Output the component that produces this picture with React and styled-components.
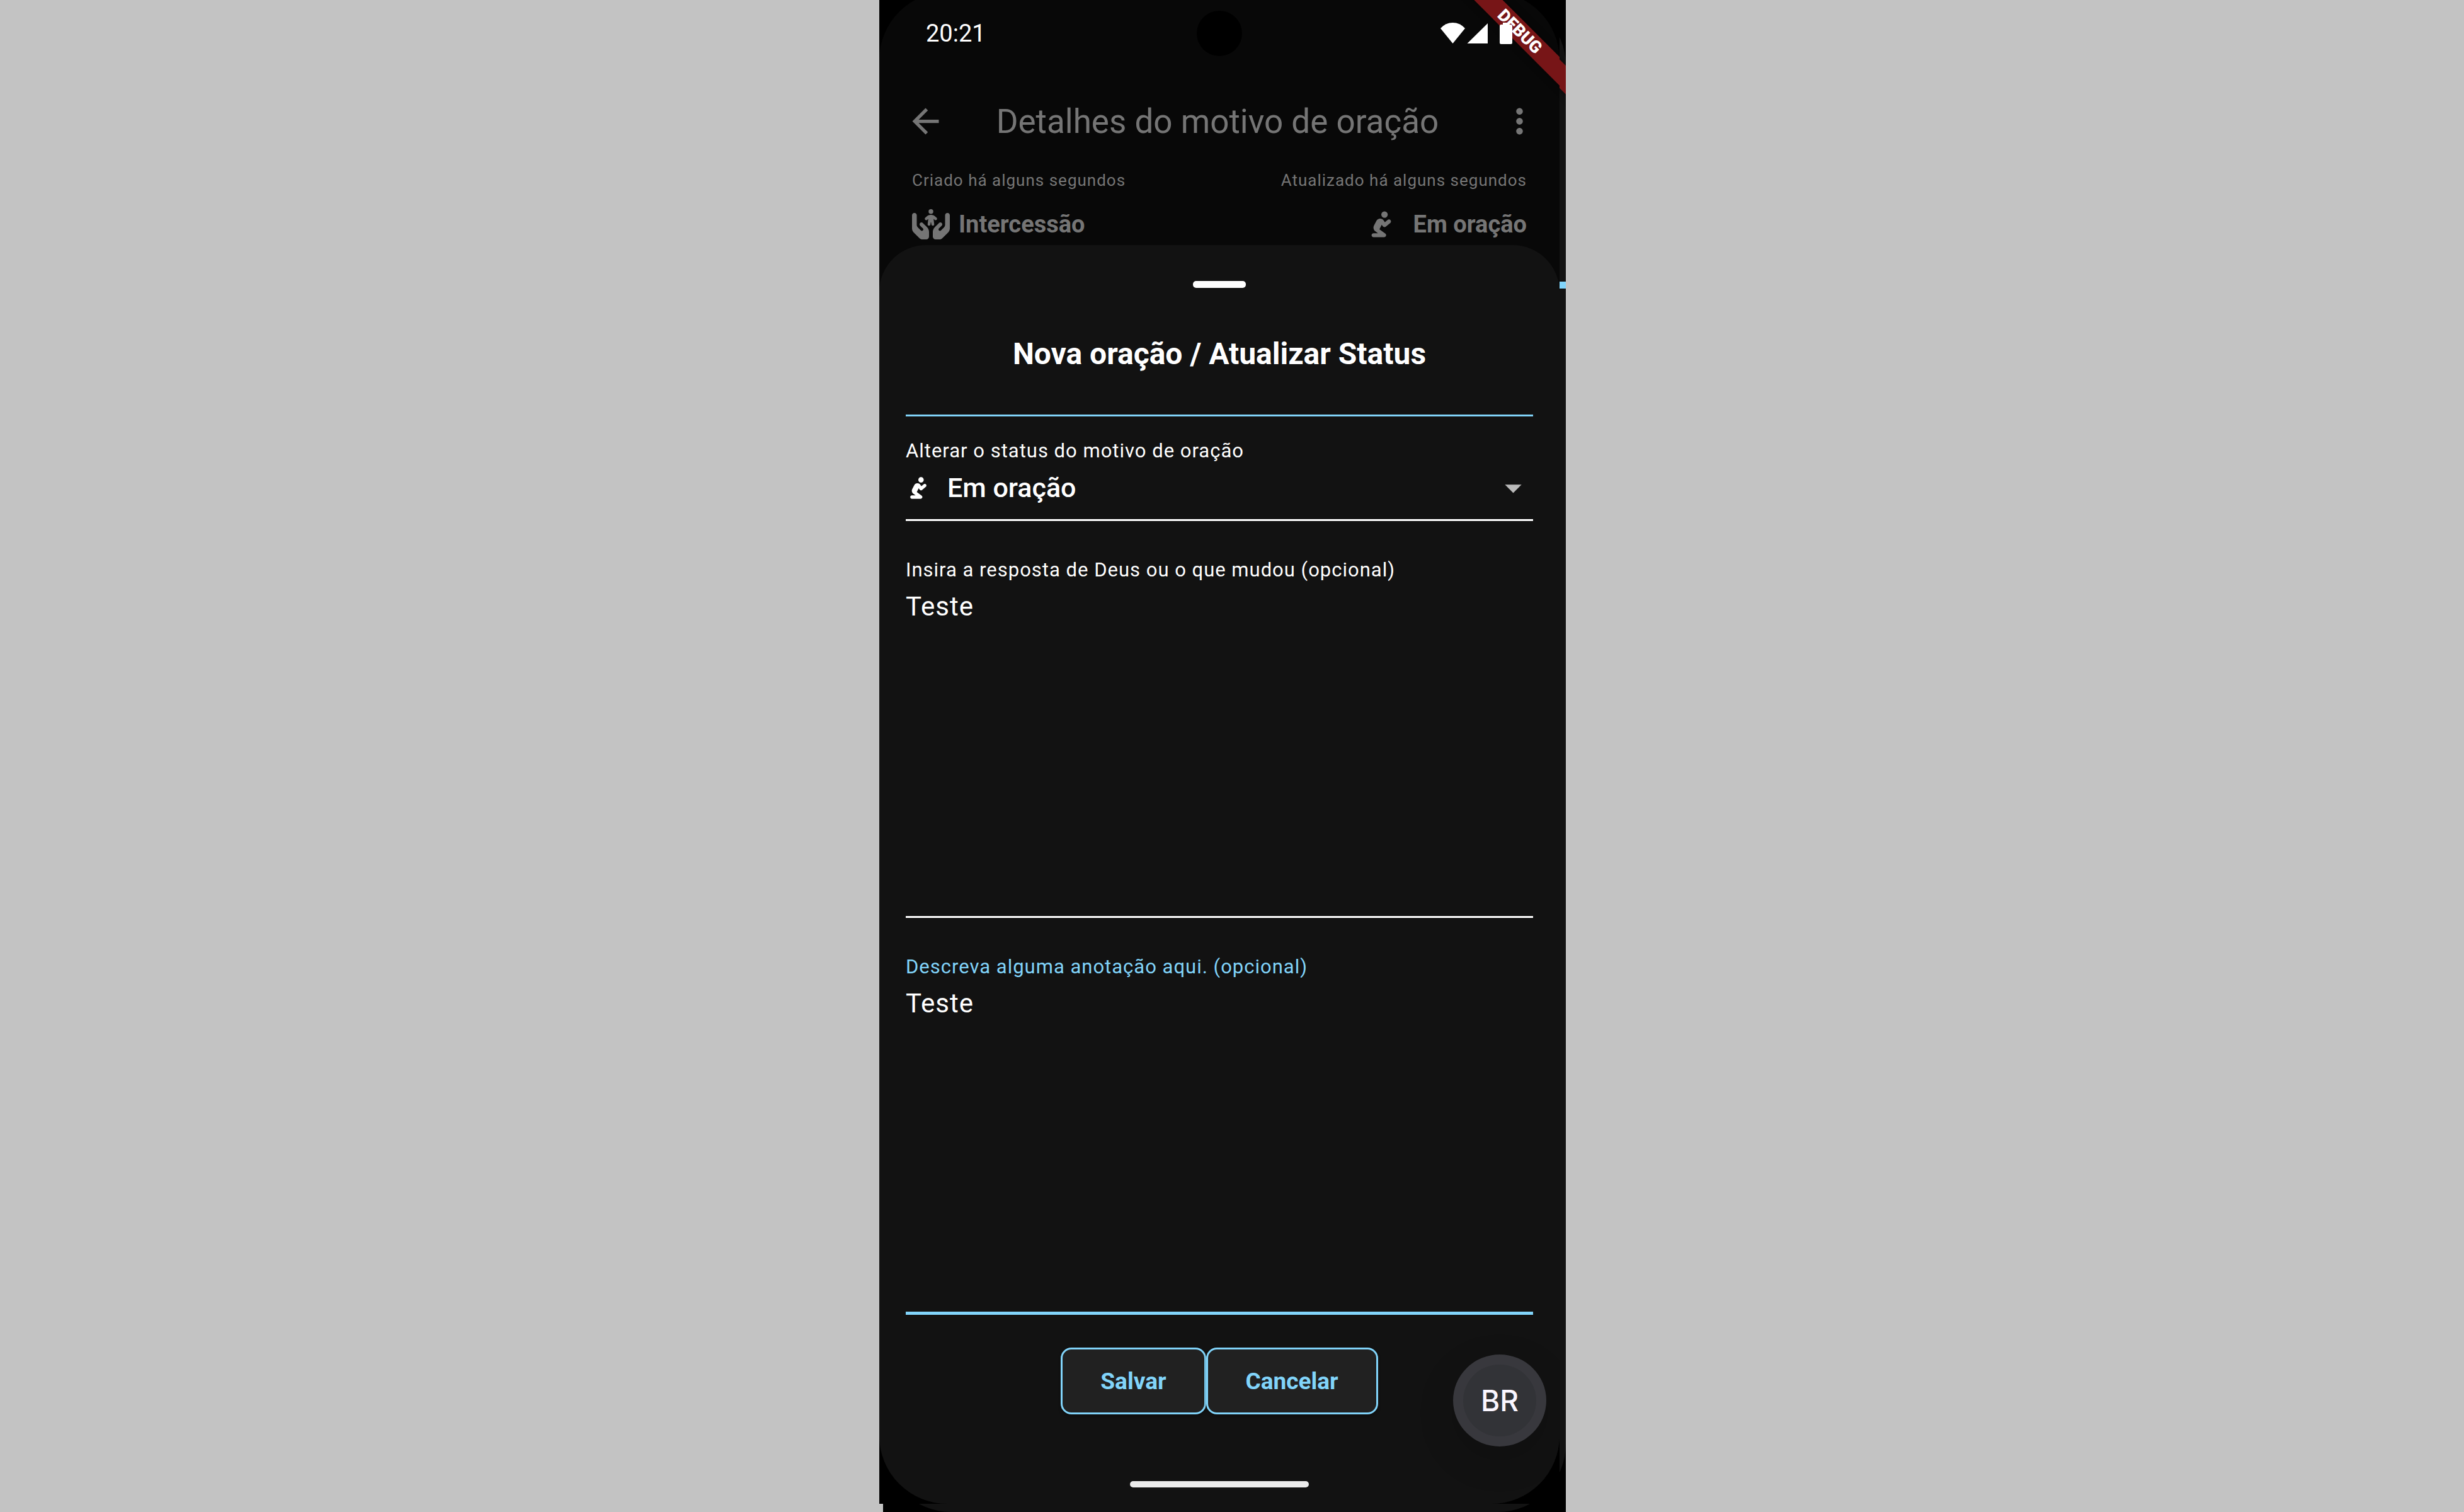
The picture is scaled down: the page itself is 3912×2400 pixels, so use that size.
import React, { useState } from "react";
import styled, { createGlobalStyle, css } from "styled-components";
import { FaHandsHoldingChild, FaPersonPraying } from "react-icons/fa6";
import { MdArrowBack, MdArrowDropDown, MdMoreVert } from "react-icons/md";

const color = {
  stage: "#c3c3c3",
  bezel: "#000000",
  dimmed: "#080808",
  sheet: "#121212",
  muted: "#757575",
  text: "#ffffff",
  accent: "#81d4fa",
  button: "#212121",
};

const GlobalStyle = createGlobalStyle`
  *, *::before, *::after { box-sizing: border-box; }
  body { margin: 0; background: ${color.stage}; }
  button, select, textarea { font: inherit; color: inherit; margin: 0; }
`;

const Stage = styled.div`
  display: flex;
  justify-content: center;
  min-height: 100vh;
  padding-right: 30px;
  font-family: Roboto, "Liberation Sans", sans-serif;
  color: ${color.text};
`;

const Device = styled.div`
  display: grid;
  width: 1090px;
  max-width: 100%;
  overflow: hidden;
`;

const layer = css`
  grid-area: 1 / 1;
  display: flex;
  flex-direction: column;
  background: ${color.bezel};
  overflow: hidden;
  position: relative;
  isolation: isolate;
`;

const BackLayer = styled.div`
  ${layer}
  margin-left: 6px;
`;

const BackScreen = styled.div`
  flex: 1;
  margin-top: -4px;
  border-radius: 108px;
  background: ${color.sheet};
`;

const BackHandle = styled.div`
  position: absolute;
  top: 447px;
  right: 0;
  width: 74px;
  height: 11px;
  background: ${color.accent};
`;

const FrontLayer = styled.div`
  ${layer}
  margin: 0 10px 13px 0;
`;

const Screen = styled.div`
  flex: 1;
  display: flex;
  flex-direction: column;
  margin-top: -13px;
  padding-top: 13px;
  border-radius: 108px;
  background: ${color.dimmed};
  overflow: hidden;
`;

const StatusBar = styled.header`
  display: grid;
  grid-template-columns: 1fr auto 1fr;
  align-items: center;
  height: 106px;
  padding: 0 74px;
  font-size: 38px;
`;

const Camera = styled.div`
  width: 72px;
  height: 72px;
  border-radius: 50%;
  background: ${color.bezel};
`;

const StatusIcons = styled.div`
  justify-self: end;
  position: relative;
  z-index: 2;
  svg { display: block; }
`;

const Ribbon = styled.div`
  position: absolute;
  z-index: 1;
  top: ${(p) => p.$top}px;
  right: -137px;
  width: 400px;
  height: 32px;
  background: #771517;
  box-shadow: 0 0 12px rgba(0, 0, 0, 0.5);
  font-size: 27px;
  font-weight: 900;
  line-height: 32px;
  text-align: center;
  transform: rotate(45deg);
`;

const AppBar = styled.nav`
  display: flex;
  align-items: center;
  height: 147px;
  margin: 13px 0 4px;
  padding: 0 32px 0 42px;
  color: ${color.muted};
`;

const IconButton = styled.button`
  display: flex;
  padding: 0;
  border: 0;
  background: none;
  font-size: 63px;
`;

const PageTitle = styled.h1`
  flex: 1;
  margin: 0;
  padding-right: 16px;
  font-size: 53px;
  font-weight: 400;
  line-height: 64px;
  text-align: center;
`;

const Meta = styled.div`
  display: flex;
  justify-content: space-between;
  padding: 0 52px;
  color: ${color.muted};
`;

const MetaDate = styled.p`
  margin: 0;
  font-size: 26px;
  line-height: 32px;
  letter-spacing: 1px;
`;

const MetaTag = styled.p`
  display: flex;
  align-items: center;
  gap: ${(p) => p.$gap}px;
  margin: 0;
  padding: 30px 0 9px;
  font-size: 38px;
  font-weight: 700;
  line-height: 48px;
  svg {
    flex: none;
    width: ${(p) => p.$icon}px;
    height: 48px;
  }
`;

const Sheet = styled.section`
  flex: 1;
  display: flex;
  flex-direction: column;
  padding: 57px 42px 0;
  border-radius: 74px 74px 0 0;
  background: ${color.sheet};
`;

const Handle = styled.div`
  align-self: center;
  width: ${(p) => p.$width}px;
  height: ${(p) => p.$height}px;
  border-radius: 5px;
  background: ${(p) => p.$tone};
`;

const SheetTitle = styled.h2`
  margin: 0;
  padding: 75px 0 66px;
  border-bottom: 3px solid ${color.accent};
  font-size: 48px;
  font-weight: 700;
  line-height: 60px;
  text-align: center;
`;

const Form = styled.form`
  display: flex;
  flex-direction: column;
`;

const Field = styled.div`
  display: flex;
  flex-direction: column;
  min-height: ${(p) => (p.$tall ? 630 : 166)}px;
  padding-top: ${(p) => (p.$tall ? 59 : 36)}px;
  border-bottom: ${(p) => (p.$active ? `5px solid ${color.accent}` : `3px solid ${color.text}`)};
`;

const Label = styled.label`
  font-size: 31px;
  line-height: 38px;
  letter-spacing: 1px;
  color: ${(p) => (p.$active ? color.accent : color.text)};
`;

const SelectRow = styled.div`
  flex: 1;
  display: flex;
  align-items: center;
  padding-bottom: 11px;
`;

const SelectIcon = styled.span`
  display: flex;
  width: 66px;
  padding-left: 5px;
  svg { width: 30px; height: 39px; }
`;

const Select = styled.select`
  flex: 1;
  padding: 0;
  border: 0;
  outline: 0;
  appearance: none;
  background: none;
  font-size: 43px;
  font-weight: 500;
  line-height: 50px;
`;

const SelectArrow = styled(MdArrowDropDown)`
  width: 63px;
  height: 63px;
  color: #bababa;
`;

const TextArea = styled.textarea`
  flex: 1;
  padding: 14px 0 0;
  border: 0;
  outline: 0;
  resize: none;
  background: none;
  font-size: 42px;
  line-height: 50px;
  letter-spacing: 1px;
`;

const Actions = styled.div`
  display: flex;
  justify-content: center;
  padding: 52px 0 106px;
`;

const ActionButton = styled.button`
  height: 106px;
  padding: 0 60px;
  border: 3px solid ${color.accent};
  border-radius: 17px;
  background: ${color.button};
  box-shadow: 0 3px 5px rgba(0, 0, 0, 0.3);
  color: ${color.accent};
  font-size: 37px;
  font-weight: 700;
`;

const Bubble = styled.button`
  position: absolute;
  right: 21px;
  bottom: 91px;
  width: 148px;
  height: 146px;
  padding: 0;
  border: 16px solid #38383d;
  border-radius: 50%;
  background: #323337;
  box-shadow: 0 20px 60px rgba(0, 0, 0, 0.15);
  color: #faf6ff;
  font-family: Inter, Roboto, sans-serif;
  font-size: 46px;
  font-weight: 500;
`;

function SignalIcons() {
  return (
    <svg width="115" height="36" viewBox="0 0 115 36" fill="#fff" aria-hidden="true">
      <path d="M0 10Q8 1 19.500 1T39 10L19.500 34Z" />
      <path d="M75 2V34H42.500Z" />
      <path d="M99 1h10v3h3a2 2 0 0 1 2 2v27a2 2 0 0 1-2 2H96a2 2 0 0 1-2-2V6a2 2 0 0 1 2-2h3Z" />
    </svg>
  );
}

export default function App() {
  const [answer, setAnswer] = useState("Teste");
  const [note, setNote] = useState("Teste");

  return (
    <Stage>
      <GlobalStyle />
      <Device>
        <BackLayer aria-hidden="true">
          <BackScreen />
          <Ribbon $top={48} />
          <BackHandle />
        </BackLayer>
        <FrontLayer>
          <Screen>
            <StatusBar>
              <time>20:21</time>
              <Camera />
              <StatusIcons>
                <SignalIcons />
              </StatusIcons>
            </StatusBar>
            <AppBar>
              <IconButton type="button" aria-label="Voltar">
                <MdArrowBack />
              </IconButton>
              <PageTitle>Detalhes do motivo de oração</PageTitle>
              <IconButton type="button" aria-label="Mais opções">
                <MdMoreVert />
              </IconButton>
            </AppBar>
            <Meta>
              <MetaDate>Criado há alguns segundos</MetaDate>
              <MetaDate>Atualizado há alguns segundos</MetaDate>
            </Meta>
            <Meta>
              <MetaTag $icon={60} $gap={14}>
                <FaHandsHoldingChild />
                Intercessão
              </MetaTag>
              <MetaTag $icon={36} $gap={33}>
                <FaPersonPraying />
                Em oração
              </MetaTag>
            </Meta>
            <Sheet>
              <Handle $width={84} $height={11} $tone={color.text} />
              <SheetTitle>Nova oração / Atualizar Status</SheetTitle>
              <Form onSubmit={(e) => e.preventDefault()}>
                <Field>
                  <Label htmlFor="status">Alterar o status do motivo de oração</Label>
                  <SelectRow>
                    <SelectIcon>
                      <FaPersonPraying />
                    </SelectIcon>
                    <Select id="status" defaultValue="praying">
                      <option value="praying">Em oração</option>
                    </Select>
                    <SelectArrow />
                  </SelectRow>
                </Field>
                <Field $tall>
                  <Label htmlFor="answer">Insira a resposta de Deus ou o que mudou (opcional)</Label>
                  <TextArea
                    id="answer"
                    value={answer}
                    onChange={(e) => setAnswer(e.target.value)}
                  />
                </Field>
                <Field $tall $active>
                  <Label htmlFor="note" $active>
                    Descreva alguma anotação aqui. (opcional)
                  </Label>
                  <TextArea
                    id="note"
                    value={note}
                    onChange={(e) => setNote(e.target.value)}
                  />
                </Field>
                <Actions>
                  <ActionButton type="submit">Salvar</ActionButton>
                  <ActionButton type="button">Cancelar</ActionButton>
                </Actions>
              </Form>
              <Handle $width={284} $height={10} $tone="#ebebeb" />
            </Sheet>
          </Screen>
          <Ribbon $top={34}>DEBUG</Ribbon>
          <Bubble type="button">BR</Bubble>
        </FrontLayer>
      </Device>
    </Stage>
  );
}
